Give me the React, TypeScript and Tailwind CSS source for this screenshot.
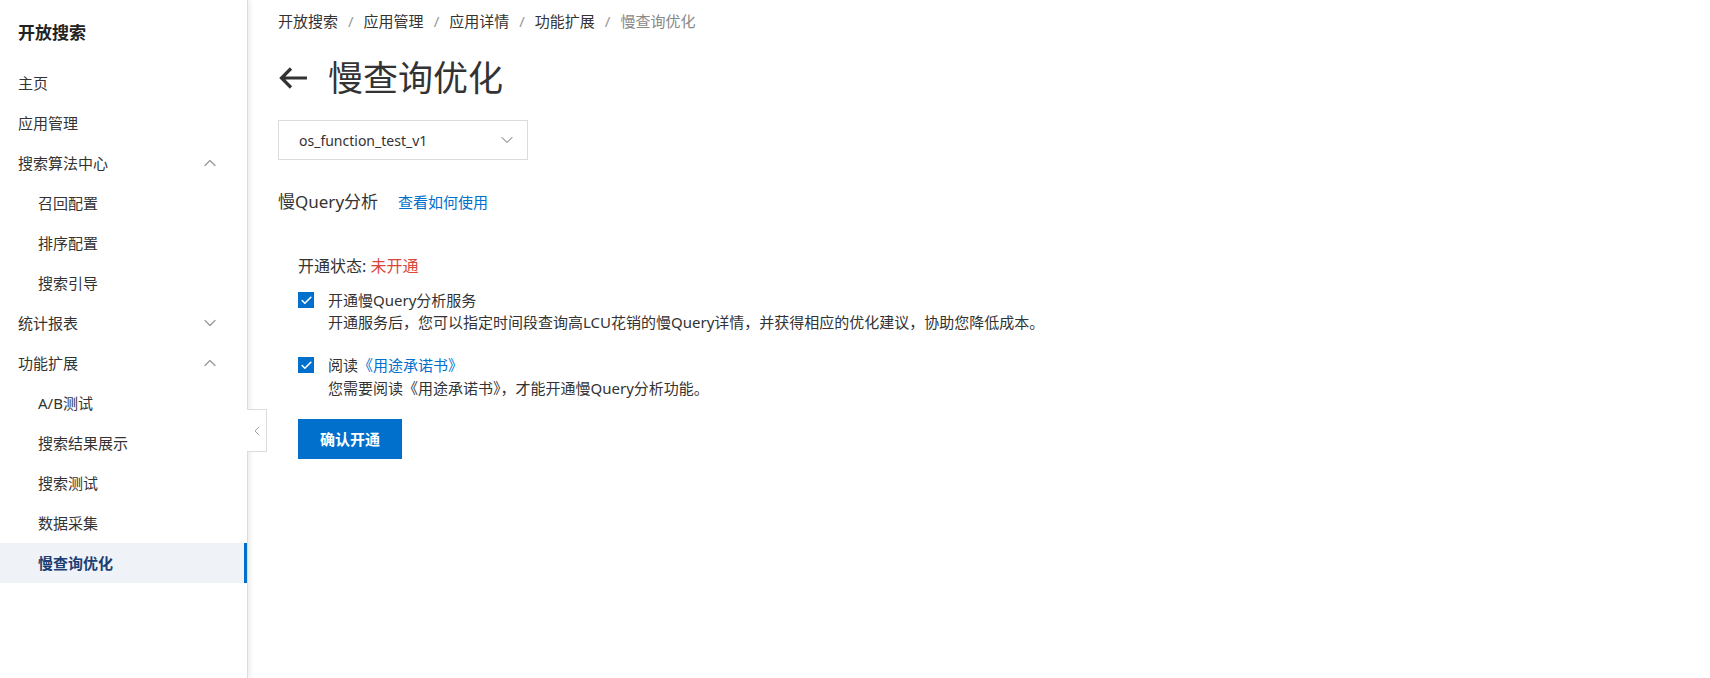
import { ChevronDown, ChevronUp, ChevronLeft, Check } from 'lucide-react'

const font = { fontFamily: '"Noto Sans", "Noto Sans CJK SC", sans-serif' }

type Item = { label: string; sub?: boolean; open?: boolean; closed?: boolean; active?: boolean }

const menu: Item[] = [
  { label: '主页' },
  { label: '应用管理' },
  { label: '搜索算法中心', open: true },
  { label: '召回配置', sub: true },
  { label: '排序配置', sub: true },
  { label: '搜索引导', sub: true },
  { label: '统计报表', closed: true },
  { label: '功能扩展', open: true },
  { label: 'A/B测试', sub: true },
  { label: '搜索结果展示', sub: true },
  { label: '搜索测试', sub: true },
  { label: '数据采集', sub: true },
  { label: '慢查询优化', sub: true, active: true },
]

const crumbs = ['开放搜索', '应用管理', '应用详情', '功能扩展']

function Box() {
  return (
    <span className="mt-[3px] flex h-[16px] w-[16px] shrink-0 items-center justify-center bg-[#0070cc]">
      <Check size={13} strokeWidth={3} className="text-white" />
    </span>
  )
}

export default function App() {
  return (
    <div className="flex h-[678px] w-full bg-white text-[#333]" style={font}>
      <aside className="relative w-[248px] shrink-0 border-r border-[#dcdcdc] shadow-[2px_0_5px_rgba(0,0,0,0.08)]">
        <div className="h-[63px] pl-[18px] pt-[21px] text-[17px] font-bold leading-[24px] text-[#222]">开放搜索</div>
        <ul>
          {menu.map((m) => (
            <li
              key={m.label}
              className={`flex h-10 items-center justify-between pr-[27px] text-[15px] ${m.sub ? 'pl-[38px]' : 'pl-[18px]'} ${
                m.active ? 'border-r-[3px] border-[#0070cc] bg-[#eff3f8] font-bold text-[#1b3f73]' : ''
              }`}
            >
              <span>{m.label}</span>
              {m.open && <ChevronUp size={20} strokeWidth={1.5} className="text-[#999]" />}
              {m.closed && <ChevronDown size={20} strokeWidth={1.5} className="text-[#999]" />}
            </li>
          ))}
        </ul>
        <div className="absolute left-[247px] top-[409px] flex h-[43px] w-[20px] items-center justify-center border border-l-0 border-[#dcdcdc] bg-white">
          <ChevronLeft size={16} strokeWidth={1.3} className="text-[#999]" />
        </div>
      </aside>

      <main className="flex-1 pl-[30px] pt-[11px]">
        <nav className="flex items-center text-[15px] leading-[20px]">
          {crumbs.map((c) => (
            <span key={c} className="flex items-center">
              <span>{c}</span>
              <span className="mx-[10px] text-[#999]">/</span>
            </span>
          ))}
          <span className="text-[#888]">慢查询优化</span>
        </nav>

        <div className="mt-[26px] flex h-[42px] items-center">
          <svg width="30" height="24" viewBox="0 0 30 24" className="text-[#333]">
            <path d="M29 12H4M13 2.5L3.5 12l9.5 9.5" fill="none" stroke="currentColor" strokeWidth="3.2" />
          </svg>
          <h1 className="ml-[20px] text-[35px] leading-[42px] text-[#333]">慢查询优化</h1>
        </div>

        <div className="mt-[21px] flex h-[40px] w-[250px] items-center justify-between border border-[#dcdcdc] pl-[20px] pr-[10px] text-[14px]">
          <span>os_function_test_v1</span>
          <ChevronDown size={20} strokeWidth={1.2} className="text-[#666]" />
        </div>

        <div className="mt-[30px] flex items-baseline">
          <span className="text-[17px] leading-[24px]">慢Query分析</span>
          <span className="ml-[20px] text-[15px] text-[#0070cc]">查看如何使用</span>
        </div>

        <section className="mt-[40px] pl-[20px]">
          <div className="text-[16px] leading-[24px]">
            开通状态: <span className="text-[#d9473b]">未开通</span>
          </div>
          <div className="mt-[11px] flex gap-[14px] text-[15px] leading-[22px]">
            <Box />
            <div>
              <div>开通慢Query分析服务</div>
              <div>开通服务后，您可以指定时间段查询高LCU花销的慢Query详情，并获得相应的优化建议，协助您降低成本。</div>
            </div>
          </div>
          <div className="mt-[21px] flex gap-[14px] text-[15px] leading-[22px]">
            <Box />
            <div>
              <div>
                阅读<span className="text-[#0070cc]">《用途承诺书》</span>
              </div>
              <div className="mt-[1px]">您需要阅读《用途承诺书》，才能开通慢Query分析功能。</div>
            </div>
          </div>
          <button className="mt-[20px] h-[40px] w-[104px] bg-[#0070cc] text-[15px] font-bold text-white">确认开通</button>
        </section>
      </main>
    </div>
  )
}
